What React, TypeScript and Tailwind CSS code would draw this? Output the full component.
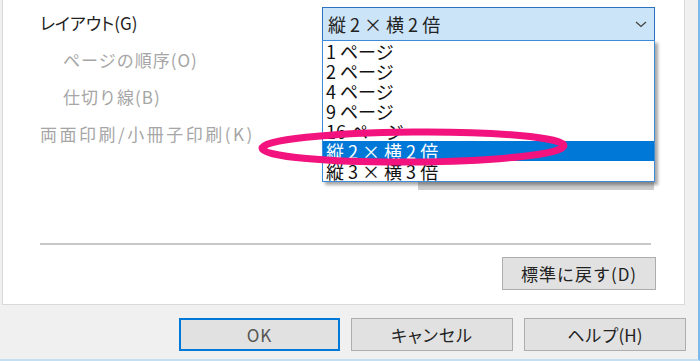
import React from "react";

const items = ["1 ページ", "2 ページ", "4 ページ", "9 ページ", "16 ページ", "縦 2 × 横 2 倍", "縦 3 × 横 3 倍"];

export default function App() {
  return (
    <div
      className="relative w-[700px] h-[361px] overflow-hidden bg-[#f0f0f0] border-r-2 border-b-2 border-r-[#7db8e8] border-b-[#c4def2] flex flex-col"
      style={{ fontFamily: '"Noto Sans CJK JP", "Noto Sans", sans-serif' }}
    >
      {/* main white panel */}
      <div className="ml-[2px] w-[683px] h-[305px] shrink-0 bg-white border border-t-0 border-[#d9d9d9] flex flex-col">
        <div className="flex flex-col pt-[4px]">
          <div className="h-[37px] flex items-center">
            <div className="w-[319px] pl-[37px] text-[17px] text-[#222] [font-feature-settings:'palt']">レイアウト(G)</div>
            <div className="relative w-[333px] h-[34px] mt-[3px]">
              <div className="w-full h-full bg-[#cce4f7] border border-[#2a72c0] flex items-center justify-between pl-[5px] pr-[7px] text-[18px] text-[#222]">
                <span>縦 2 × 横 2 倍</span>
                <svg width="12" height="7" viewBox="0 0 12 7">
                  <path d="M1 1 L6 5.5 L11 1" fill="none" stroke="#444" strokeWidth="1.3" />
                </svg>
              </div>
              {/* dropdown list */}
              <div className="absolute left-[0px] top-[33px] w-[333px] bg-white border border-[#3c8ad8] shadow-[3px_3px_3px_rgba(0,0,0,0.35)] z-10">
                {items.map((t, i) => (
                  <div
                    key={t}
                    className={
                      i === 5
                        ? "h-[20px] leading-[20px] pl-[3px] text-[18px] bg-[#0078d7] text-white whitespace-nowrap"
                        : "h-[20px] leading-[20px] pl-[3px] text-[18px] text-[#111] whitespace-nowrap"
                    }
                  >
                    {t}
                  </div>
                ))}
              </div>
            </div>
          </div>
          <div className="h-[37px] flex items-center pl-[60px] text-[17px] tracking-[1px] text-[#a6a6a6]">ページの順序(O)</div>
          <div className="h-[37px] flex items-center pl-[60px] text-[17px] tracking-[1px] text-[#a6a6a6]">仕切り線(B)</div>
          <div className="h-[37px] flex items-center pl-[37px] text-[17px] tracking-[2.5px] text-[#a6a6a6]">両面印刷/小冊子印刷(K)</div>
          {/* button hidden behind dropdown */}
          <div className="flex mt-[5px]">
            <div className="ml-[415px] w-[236px] h-[33px] bg-[#cdcdcd]"></div>
          </div>
        </div>
        {/* separator */}
        <div className="ml-[37px] w-[611px] h-[2px] bg-[#c8c8c8] mt-[53px]"></div>
        {/* reset button */}
        <div className="flex justify-end pr-[28px] mt-[12px]">
          <button className="w-[154px] h-[33px] bg-[#e1e1e1] border border-[#adadad] text-[17px] tracking-[1px] text-[#222] flex items-center justify-center">
            標準に戻す(D)
          </button>
        </div>
      </div>
      {/* bottom buttons */}
      <div className="flex justify-end gap-[11px] pr-[12px] mt-[13px]">
        <button className="w-[161px] h-[33px] bg-[#e1e1e1] border-2 border-[#0078d7] text-[17px] tracking-[1px] text-[#555] flex items-center justify-center">
          OK
        </button>
        <button className="w-[162px] h-[33px] bg-[#e1e1e1] border border-[#adadad] text-[17px] tracking-[1px] text-[#222] flex items-center justify-center [font-feature-settings:'palt']">
          キャンセル
        </button>
        <button className="w-[162px] h-[33px] bg-[#e1e1e1] border border-[#adadad] text-[17px] text-[#222] flex items-center justify-center">
          ヘルプ(H)
        </button>
      </div>
      {/* annotation ellipse */}
      <svg className="absolute left-0 top-0 pointer-events-none z-20" width="700" height="361">
        <ellipse cx="413" cy="147" rx="151" ry="15" fill="none" stroke="#f2137e" strokeWidth="7" transform="rotate(-0.5 413 147)" />
      </svg>
    </div>
  );
}
